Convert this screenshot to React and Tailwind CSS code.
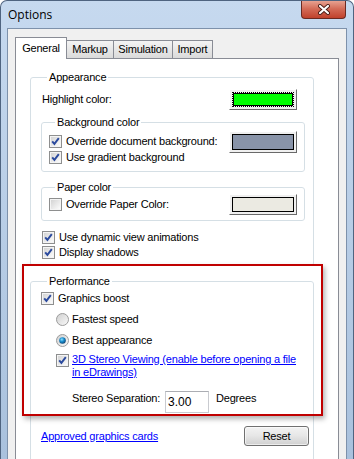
import React from 'react';

const CheckBox = ({checked}) => (
  <svg width="13" height="13" viewBox="0 0 13 13" className="shrink-0">
    <defs>
      <linearGradient id="cbFill" x1="0" y1="0" x2="1" y2="1">
        <stop offset="0" stopColor="#d4d4d4" />
        <stop offset="1" stopColor="#fbfbfb" />
      </linearGradient>
    </defs>
    <rect x="0.5" y="0.5" width="12" height="12" fill="#f4f4f4" stroke="#8e8f8f" />
    <rect x="2" y="2" width="9" height="9" fill="url(#cbFill)" />
    {checked && (
      <path d="M3.2 6.3 L5.4 8.9 L9.8 3.2" fill="none" stroke="#2b4a9e" strokeWidth="1.9" />
    )}
  </svg>
);

const Radio = ({checked}) => (
  <svg width="13" height="13" viewBox="0 0 13 13" className="shrink-0">
    <defs>
      <linearGradient id="rdFill" x1="0" y1="0" x2="1" y2="1">
        <stop offset="0" stopColor="#cfcfcf" />
        <stop offset="1" stopColor="#fafafa" />
      </linearGradient>
      <radialGradient id="rdDot" cx="0.4" cy="0.35" r="0.7">
        <stop offset="0" stopColor="#8fe0ff" />
        <stop offset="0.45" stopColor="#1b8fcf" />
        <stop offset="1" stopColor="#0b3f6e" />
      </radialGradient>
    </defs>
    <circle cx="6.5" cy="6.5" r="6" fill="url(#rdFill)" stroke="#9c9c9c" />
    {checked && <circle cx="6.5" cy="6.5" r="3.3" fill="url(#rdDot)" />}
  </svg>
);

const CheckRow = ({checked, children, className = ''}) => (
  <div className={`flex items-center gap-[4px] ${className}`}>
    <CheckBox checked={checked} />
    <span>{children}</span>
  </div>
);

const Group = ({title, className = '', children}) => (
  <fieldset className={`rounded-[3px] border border-[#d5dfe5] ${className}`}>
    <legend className="ml-[6px] px-[2px] leading-[14px]">{title}</legend>
    {children}
  </fieldset>
);

// classic raised colour button
const Swatch = ({color, focused, h = 'h-[21px]'}) => (
  <div
    className={`w-[68px] ${h} shrink-0 border border-t-white border-l-white border-r-[#696969] border-b-[#696969] bg-[#f0f0f0] p-[2px]`}
  >
    <div className={`h-full ${focused ? 'border border-dotted border-black' : ''}`}>
      <div className="h-full border border-black" style={{backgroundColor: color}} />
    </div>
  </div>
);

const CloseButton = () => (
  <div className="-mt-px mr-[7px] flex h-[19px] w-[45px] items-center justify-center rounded-b-[4px] border border-t-0 border-[#6b2a22] bg-linear-to-b from-[#e9a898] via-[#d36a56] to-[#c0412c] shadow-[inset_0_1px_0_rgba(255,255,255,0.5)]">
    <svg width="14" height="11" viewBox="0 0 14 11">
      <path d="M3 2 L11 9 M11 2 L3 9" stroke="#4a1d17" strokeWidth="4" strokeLinecap="round" />
      <path d="M3 2 L11 9 M11 2 L3 9" stroke="#ffffff" strokeWidth="2.2" strokeLinecap="round" />
    </svg>
  </div>
);

const Tab = ({label, selected, w}) =>
  selected ? (
    <div className={`${w} relative z-10 flex h-[22px] justify-center border border-b-0 border-[#898c95] bg-white pt-[3px] leading-[14px]`}>
      {label}
    </div>
  ) : (
    <div className={`${w} -ml-px flex h-[19px] justify-center border border-[#898c95] bg-linear-to-b from-[#f4f4f4] to-[#dadada] pt-[1px] leading-[14px]`}>
      {label}
    </div>
  );

export default function App() {
  return (
    <div className="relative h-[459px] w-[354px] overflow-hidden rounded-t-[7px] border border-b-0 border-[#4f6480] bg-linear-to-b from-[#c6d9ef] to-[#a9c1dd] font-['Liberation_Sans',Arial,sans-serif] text-[11px] tracking-[-0.2px] text-black">
      <div className="flex h-[27px] items-start justify-between">
        <span className="pl-[7px] pt-[6px] font-['Open_Sans',sans-serif] text-[12px] leading-[16px] tracking-normal">
          Options
        </span>
        <CloseButton />
      </div>

      <div className="mx-[6px] h-[440px] border border-[#7d91ab] bg-[#f0f0f0] pl-[7px] pt-[8px]">
        <div className="relative z-10 -mb-px flex h-[22px] items-end">
          <Tab label="General" selected w="w-[52px]" />
          <Tab label="Markup" w="w-[48px]" />
          <Tab label="Simulation" w="w-[60px]" />
          <Tab label="Import" w="w-[41px]" />
        </div>

        <div className="h-[420px] w-[324px] border border-[#898c95] bg-white pt-[11px]">
          <Group title="Appearance" className="ml-[14px] w-[284px] pb-[5px] pl-[10px] pr-[8px]">
            <div className="mt-[5px] flex h-[21px] items-center justify-between pl-[1px] pr-[8px]">
              <span>Highlight color:</span>
              <Swatch color="#00ff00" focused />
            </div>

            <Group title="Background color" className="mt-[5px] pb-[6px] pl-[7px] pr-[7px]">
              <div className="mt-[2px] flex items-start justify-between">
                <div className="pt-[2px]">
                  <CheckRow checked className="h-[16px]">Override document background:</CheckRow>
                  <CheckRow checked className="h-[16px]">Use gradient background</CheckRow>
                </div>
                <Swatch color="#8893a8" h="h-[22px]" />
              </div>
            </Group>

            <Group title="Paper color" className="mt-[8px] pb-[5px] pl-[7px] pr-[7px]">
              <div className="flex h-[21px] items-center justify-between">
                <CheckRow>Override Paper Color:</CheckRow>
                <Swatch color="#ebeae2" />
              </div>
            </Group>

            <div className="mt-[9px] pl-[1px]">
              <CheckRow checked className="h-[15px]">Use dynamic view animations</CheckRow>
              <CheckRow checked className="h-[15px]">Display shadows</CheckRow>
            </div>
          </Group>

          <Group title="Performance" className="ml-[14px] mt-[8px] w-[284px] pb-[40px] pl-[10px] pr-[4px]">
            <CheckRow checked className="h-[21px]">Graphics boost</CheckRow>
            <div className="flex h-[21px] items-center gap-[3px] pl-[15px]">
              <Radio />
              <span>Fastest speed</span>
            </div>
            <div className="flex h-[21px] items-center gap-[3px] pl-[15px]">
              <Radio checked />
              <span>Best appearance</span>
            </div>
            <div className="mt-[2px] flex items-start gap-[3px] pl-[15px]">
              <div className="pt-[1px]">
                <CheckBox checked />
              </div>
              <span className="leading-[13px] text-[#0000ff] underline">
                3D Stereo Viewing (enable before opening a file
                <br />
                in eDrawings)
              </span>
            </div>
            <div className="mt-[12px] flex items-start pl-[31px]">
              <span className="w-[93px] leading-[14px]">Stereo Separation:</span>
              <div className="flex h-[22px] w-[44px] items-center border border-[#c9cbd0] border-t-[#abadb3] bg-white pl-[2px] text-[12px] tracking-normal">
                3.00
              </div>
              <span className="ml-[7px] leading-[14px]">Degrees</span>
            </div>
            <div className="mt-[13px] flex h-[20px] items-center justify-between">
              <span className="text-[#0000ff] underline">Approved graphics cards</span>
              <div className="flex h-[20px] w-[65px] items-center justify-center rounded-[3px] border border-[#707070] bg-linear-to-b from-[#f3f3f3] via-[#e6e6e6] to-[#d0d0d0] shadow-[inset_0_0_0_1px_rgba(255,255,255,0.6)]">
                Reset
              </div>
            </div>
          </Group>
        </div>
      </div>

      <div className="absolute left-[21px] top-[263px] h-[152px] w-[301px] border-2 border-[#c00000] shadow-[2px_3px_5px_rgba(0,0,0,0.3)]" />
    </div>
  );
}
